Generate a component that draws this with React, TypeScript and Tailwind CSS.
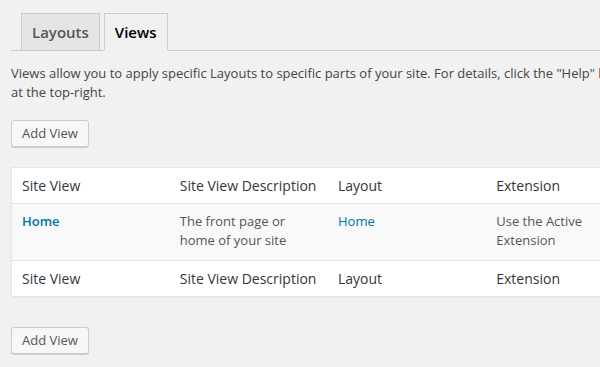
import React from "react";

const rows = [
  { view: "Home", description: "The front page or home of your site", layout: "Home", extension: "Use the Active Extension" },
];

function AddViewButton() {
  return (
    <button className="h-[27px] rounded-[3px] border border-[#cccccc] bg-[#f7f7f7] px-[10px] text-[13px] leading-[25px] text-[#555555] shadow-[0_1px_0_#cccccc]">
      Add View
    </button>
  );
}

function HeadRow() {
  return (
    <tr className="bg-white text-[14px] text-[#32373c]">
      <th className="w-[158px] px-[10px] py-[8px] text-left font-normal leading-[19px]">Site View</th>
      <th className="w-[158px] px-[10px] py-[8px] text-left font-normal leading-[19px]">Site View Description</th>
      <th className="w-[158px] px-[10px] py-[8px] text-left font-normal leading-[19px]">Layout</th>
      <th className="w-[158px] px-[10px] py-[8px] text-left font-normal leading-[19px]">Extension</th>
    </tr>
  );
}

export default function App() {
  return (
    <div
      className="h-[367px] w-[600px] overflow-hidden bg-[#f1f1f1] text-[#444444]"
      style={{ fontFamily: '"Open Sans", "Liberation Sans", sans-serif' }}
    >
      <div className="w-[680px] pl-[11px] pt-[13px]">
        <div className="flex gap-[4px] border-b border-[#cccccc] pl-[10px]">
          <div className="-mb-px border border-[#cccccc] bg-[#e5e5e5] px-[10px] py-[6px] text-[15px] font-semibold leading-[24px] text-[#555555]">
            Layouts
          </div>
          <div className="-mb-px border border-b-[#f1f1f1] border-[#cccccc] bg-[#f1f1f1] px-[10px] py-[6px] text-[15px] font-semibold leading-[24px] text-black">
            Views
          </div>
        </div>

        <p className="mt-[13px] w-[620px] text-[13px] leading-[19px]">
          Views allow you to apply specific Layouts to specific parts of your site. For details, click the "Help" link
          at the top-right.
        </p>

        <div className="mt-[18px]">
          <AddViewButton />
        </div>

        <table className="mt-[20px] w-[634px] table-fixed border-collapse border border-[#e5e5e5] shadow-[0_1px_1px_rgba(0,0,0,0.04)]">
          <thead className="border-b border-[#e1e1e1]">
            <HeadRow />
          </thead>
          <tbody>
            {rows.map((r) => (
              <tr key={r.view} className="bg-[#f9f9f9] align-top text-[13px] leading-[19px] text-[#555555]">
                <td className="px-[10px] pb-[10px] pt-[8px]">
                  <a className="font-semibold text-[#0073aa]">{r.view}</a>
                </td>
                <td className="px-[10px] pb-[10px] pt-[8px] pr-[30px]">{r.description}</td>
                <td className="px-[10px] pb-[10px] pt-[8px]">
                  <a className="text-[#0073aa]">{r.layout}</a>
                </td>
                <td className="px-[10px] pb-[10px] pt-[8px] pr-[40px]">{r.extension}</td>
              </tr>
            ))}
          </tbody>
          <tfoot className="border-t border-[#e1e1e1]">
            <HeadRow />
          </tfoot>
        </table>

        <div className="mt-[30px]">
          <AddViewButton />
        </div>
      </div>
    </div>
  );
}
